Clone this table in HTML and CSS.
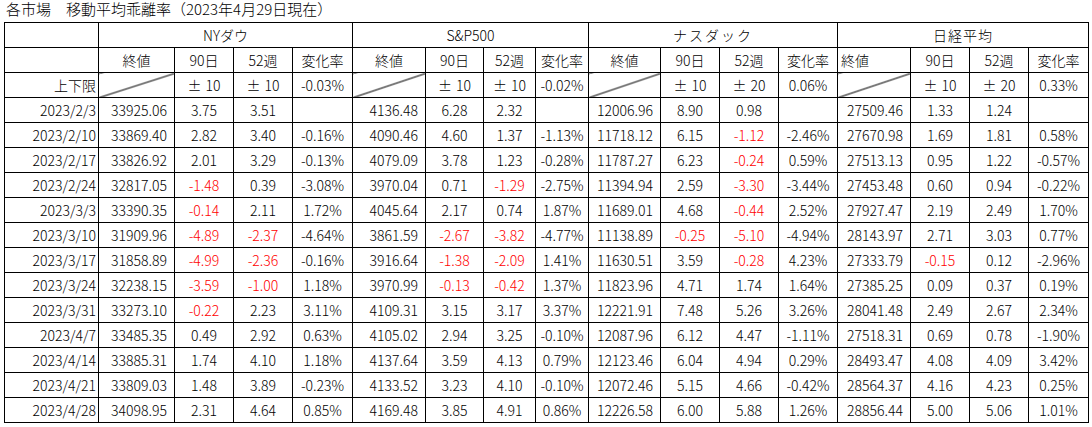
FILE: index.html
```html
<!DOCTYPE html>
<html lang="ja">
<head>
<meta charset="utf-8">
<title>各市場 移動平均乖離率</title>
<link rel="stylesheet" href="styles.css">
</head>
<body>
<div class="title">各市場　移動平均乖離率（2023年4月29日現在）</div>
<table class="grid">
<colgroup>
<col class="w94"><col class="w76"><col class="w59"><col class="w59"><col class="w60">
<col class="w73"><col class="w58"><col class="w52"><col class="w53">
<col class="w72"><col class="w59"><col class="w59"><col class="w59">
<col class="w73"><col class="w59"><col class="w59"><col class="w60">
</colgroup>
<tbody>
<tr><td></td><td colspan="4" class="c">NYダウ</td><td colspan="4" class="c">S&amp;P500</td><td colspan="4" class="c kana">ナスダック</td><td colspan="4" class="c kana2">日経平均</td></tr>
<tr><td></td>
<td class="c">終値</td><td class="c">90日</td><td class="c">52週</td><td class="c">変化率</td>
<td class="c">終値</td><td class="c">90日</td><td class="c">52週</td><td class="c">変化率</td>
<td class="c">終値</td><td class="c">90日</td><td class="c">52週</td><td class="c">変化率</td>
<td class="l">終値</td><td class="c">90日</td><td class="c">52週</td><td class="c">変化率</td></tr>
<tr><td class="d">上下限</td>
<td class="diag"></td><td class="c"><span class="pm">±</span>10</td><td class="c"><span class="pm">±</span>10</td><td class="c">-0.03%</td>
<td class="diag"></td><td class="c"><span class="pm">±</span>10</td><td class="c"><span class="pm">±</span>10</td><td class="c">-0.02%</td>
<td class="diag"></td><td class="c"><span class="pm">±</span>10</td><td class="c"><span class="pm">±</span>20</td><td class="c">0.06%</td>
<td class="diag"></td><td class="c"><span class="pm">±</span>10</td><td class="c"><span class="pm">±</span>20</td><td class="c">0.33%</td></tr>
<tr><td class="d">2023/2/3</td><td class="r">33925.06</td><td class="c">3.75</td><td class="c">3.51</td><td class="c"></td><td class="r">4136.48</td><td class="c">6.28</td><td class="c">2.32</td><td class="c"></td><td class="r">12006.96</td><td class="c">8.90</td><td class="c">0.98</td><td class="c"></td><td class="r">27509.46</td><td class="c">1.33</td><td class="c">1.24</td><td class="c"></td></tr>
<tr><td class="d">2023/2/10</td><td class="r">33869.40</td><td class="c">2.82</td><td class="c">3.40</td><td class="c">-0.16%</td><td class="r">4090.46</td><td class="c">4.60</td><td class="c">1.37</td><td class="c">-1.13%</td><td class="r">11718.12</td><td class="c">6.15</td><td class="c neg">-1.12</td><td class="c">-2.46%</td><td class="r">27670.98</td><td class="c">1.69</td><td class="c">1.81</td><td class="c">0.58%</td></tr>
<tr><td class="d">2023/2/17</td><td class="r">33826.92</td><td class="c">2.01</td><td class="c">3.29</td><td class="c">-0.13%</td><td class="r">4079.09</td><td class="c">3.78</td><td class="c">1.23</td><td class="c">-0.28%</td><td class="r">11787.27</td><td class="c">6.23</td><td class="c neg">-0.24</td><td class="c">0.59%</td><td class="r">27513.13</td><td class="c">0.95</td><td class="c">1.22</td><td class="c">-0.57%</td></tr>
<tr><td class="d">2023/2/24</td><td class="r">32817.05</td><td class="c neg">-1.48</td><td class="c">0.39</td><td class="c">-3.08%</td><td class="r">3970.04</td><td class="c">0.71</td><td class="c neg">-1.29</td><td class="c">-2.75%</td><td class="r">11394.94</td><td class="c">2.59</td><td class="c neg">-3.30</td><td class="c">-3.44%</td><td class="r">27453.48</td><td class="c">0.60</td><td class="c">0.94</td><td class="c">-0.22%</td></tr>
<tr><td class="d">2023/3/3</td><td class="r">33390.35</td><td class="c neg">-0.14</td><td class="c">2.11</td><td class="c">1.72%</td><td class="r">4045.64</td><td class="c">2.17</td><td class="c">0.74</td><td class="c">1.87%</td><td class="r">11689.01</td><td class="c">4.68</td><td class="c neg">-0.44</td><td class="c">2.52%</td><td class="r">27927.47</td><td class="c">2.19</td><td class="c">2.49</td><td class="c">1.70%</td></tr>
<tr><td class="d">2023/3/10</td><td class="r">31909.96</td><td class="c neg">-4.89</td><td class="c neg">-2.37</td><td class="c">-4.64%</td><td class="r">3861.59</td><td class="c neg">-2.67</td><td class="c neg">-3.82</td><td class="c">-4.77%</td><td class="r">11138.89</td><td class="c neg">-0.25</td><td class="c neg">-5.10</td><td class="c">-4.94%</td><td class="r">28143.97</td><td class="c">2.71</td><td class="c">3.03</td><td class="c">0.77%</td></tr>
<tr><td class="d">2023/3/17</td><td class="r">31858.89</td><td class="c neg">-4.99</td><td class="c neg">-2.36</td><td class="c">-0.16%</td><td class="r">3916.64</td><td class="c neg">-1.38</td><td class="c neg">-2.09</td><td class="c">1.41%</td><td class="r">11630.51</td><td class="c">3.59</td><td class="c neg">-0.28</td><td class="c">4.23%</td><td class="r">27333.79</td><td class="c neg">-0.15</td><td class="c">0.12</td><td class="c">-2.96%</td></tr>
<tr><td class="d">2023/3/24</td><td class="r">32238.15</td><td class="c neg">-3.59</td><td class="c neg">-1.00</td><td class="c">1.18%</td><td class="r">3970.99</td><td class="c neg">-0.13</td><td class="c neg">-0.42</td><td class="c">1.37%</td><td class="r">11823.96</td><td class="c">4.71</td><td class="c">1.74</td><td class="c">1.64%</td><td class="r">27385.25</td><td class="c">0.09</td><td class="c">0.37</td><td class="c">0.19%</td></tr>
<tr><td class="d">2023/3/31</td><td class="r">33273.10</td><td class="c neg">-0.22</td><td class="c">2.23</td><td class="c">3.11%</td><td class="r">4109.31</td><td class="c">3.15</td><td class="c">3.17</td><td class="c">3.37%</td><td class="r">12221.91</td><td class="c">7.48</td><td class="c">5.26</td><td class="c">3.26%</td><td class="r">28041.48</td><td class="c">2.49</td><td class="c">2.67</td><td class="c">2.34%</td></tr>
<tr><td class="d">2023/4/7</td><td class="r">33485.35</td><td class="c">0.49</td><td class="c">2.92</td><td class="c">0.63%</td><td class="r">4105.02</td><td class="c">2.94</td><td class="c">3.25</td><td class="c">-0.10%</td><td class="r">12087.96</td><td class="c">6.12</td><td class="c">4.47</td><td class="c">-1.11%</td><td class="r">27518.31</td><td class="c">0.69</td><td class="c">0.78</td><td class="c">-1.90%</td></tr>
<tr><td class="d">2023/4/14</td><td class="r">33885.31</td><td class="c">1.74</td><td class="c">4.10</td><td class="c">1.18%</td><td class="r">4137.64</td><td class="c">3.59</td><td class="c">4.13</td><td class="c">0.79%</td><td class="r">12123.46</td><td class="c">6.04</td><td class="c">4.94</td><td class="c">0.29%</td><td class="r">28493.47</td><td class="c">4.08</td><td class="c">4.09</td><td class="c">3.42%</td></tr>
<tr><td class="d">2023/4/21</td><td class="r">33809.03</td><td class="c">1.48</td><td class="c">3.89</td><td class="c">-0.23%</td><td class="r">4133.52</td><td class="c">3.23</td><td class="c">4.10</td><td class="c">-0.10%</td><td class="r">12072.46</td><td class="c">5.15</td><td class="c">4.66</td><td class="c">-0.42%</td><td class="r">28564.37</td><td class="c">4.16</td><td class="c">4.23</td><td class="c">0.25%</td></tr>
<tr><td class="d">2023/4/28</td><td class="r">34098.95</td><td class="c">2.31</td><td class="c">4.64</td><td class="c">0.85%</td><td class="r">4169.48</td><td class="c">3.85</td><td class="c">4.91</td><td class="c">0.86%</td><td class="r">12226.58</td><td class="c">6.00</td><td class="c">5.88</td><td class="c">1.26%</td><td class="r">28856.44</td><td class="c">5.00</td><td class="c">5.06</td><td class="c">1.01%</td></tr>
</tbody>
</table>
</body>
</html>
```
FILE: styles.css
```css
html, body {
  margin: 0;
  padding: 0;
  background: #fff;
}
body {
  padding: 0 4px;
  font-family: "Noto Sans CJK JP", "Noto Sans", sans-serif;
  font-size: 14px;
  font-weight: 300;
  color: #000;
}
.title {
  height: 22px;
  line-height: 18px;
  padding-left: 2px;
  font-size: 15px;
  white-space: nowrap;
}
.grid {
  border-collapse: collapse;
  table-layout: fixed;
  width: 1085px;
}
.grid td {
  border: 1px solid #000;
  height: 24px;
  padding: 0;
  line-height: 20px;
  white-space: nowrap;
  overflow: hidden;
  vertical-align: middle;
}
.w94 { width: 94px; }
.w76 { width: 76px; }
.w73 { width: 73px; }
.w72 { width: 72px; }
.w60 { width: 60px; }
.w59 { width: 59px; }
.w58 { width: 58px; }
.w53 { width: 53px; }
.w52 { width: 52px; }
.grid td.c { text-align: center; }
.grid td.l { text-align: left; padding-left: 3px; }
.grid td.r { text-align: right; padding-right: 7px; }
.grid td.d { text-align: right; padding-right: 2px; }
.grid td.neg { color: #f00; }
.grid td.kana { letter-spacing: 2px; }
.grid td.kana2 { letter-spacing: 1px; }
.pm { margin-right: 4px; }
.grid td.diag {
  background: linear-gradient(to bottom right, transparent calc(50% - 1px), #000 50%, transparent calc(50% + 1px));
}
```
